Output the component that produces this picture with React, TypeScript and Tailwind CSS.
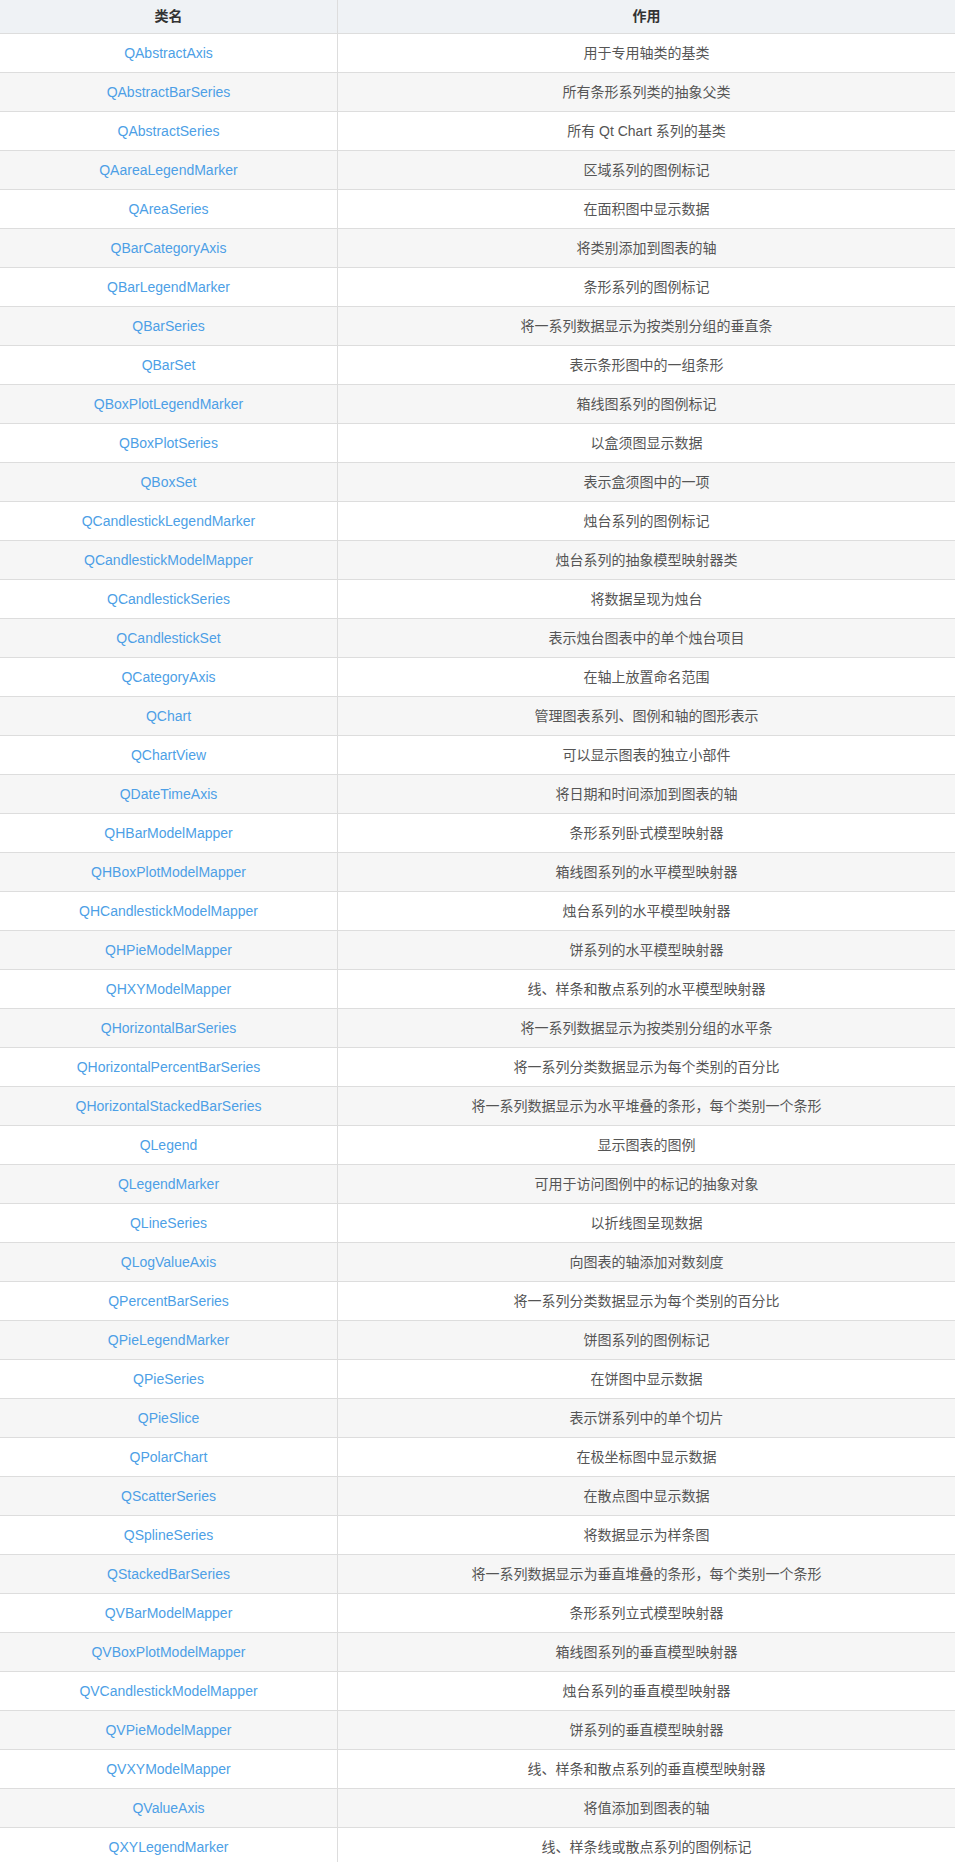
import React from 'react';

type Row = [string, string];

const rows: Row[] = [
    ['QAbstractAxis', '用于专用轴类的基类'],
    ['QAbstractBarSeries', '所有条形系列类的抽象父类'],
    ['QAbstractSeries', '所有 Qt Chart 系列的基类'],
    ['QAareaLegendMarker', '区域系列的图例标记'],
    ['QAreaSeries', '在面积图中显示数据'],
    ['QBarCategoryAxis', '将类别添加到图表的轴'],
    ['QBarLegendMarker', '条形系列的图例标记'],
    ['QBarSeries', '将一系列数据显示为按类别分组的垂直条'],
    ['QBarSet', '表示条形图中的一组条形'],
    ['QBoxPlotLegendMarker', '箱线图系列的图例标记'],
    ['QBoxPlotSeries', '以盒须图显示数据'],
    ['QBoxSet', '表示盒须图中的一项'],
    ['QCandlestickLegendMarker', '烛台系列的图例标记'],
    ['QCandlestickModelMapper', '烛台系列的抽象模型映射器类'],
    ['QCandlestickSeries', '将数据呈现为烛台'],
    ['QCandlestickSet', '表示烛台图表中的单个烛台项目'],
    ['QCategoryAxis', '在轴上放置命名范围'],
    ['QChart', '管理图表系列、图例和轴的图形表示'],
    ['QChartView', '可以显示图表的独立小部件'],
    ['QDateTimeAxis', '将日期和时间添加到图表的轴'],
    ['QHBarModelMapper', '条形系列卧式模型映射器'],
    ['QHBoxPlotModelMapper', '箱线图系列的水平模型映射器'],
    ['QHCandlestickModelMapper', '烛台系列的水平模型映射器'],
    ['QHPieModelMapper', '饼系列的水平模型映射器'],
    ['QHXYModelMapper', '线、样条和散点系列的水平模型映射器'],
    ['QHorizontalBarSeries', '将一系列数据显示为按类别分组的水平条'],
    ['QHorizontalPercentBarSeries', '将一系列分类数据显示为每个类别的百分比'],
    ['QHorizontalStackedBarSeries', '将一系列数据显示为水平堆叠的条形，每个类别一个条形'],
    ['QLegend', '显示图表的图例'],
    ['QLegendMarker', '可用于访问图例中的标记的抽象对象'],
    ['QLineSeries', '以折线图呈现数据'],
    ['QLogValueAxis', '向图表的轴添加对数刻度'],
    ['QPercentBarSeries', '将一系列分类数据显示为每个类别的百分比'],
    ['QPieLegendMarker', '饼图系列的图例标记'],
    ['QPieSeries', '在饼图中显示数据'],
    ['QPieSlice', '表示饼系列中的单个切片'],
    ['QPolarChart', '在极坐标图中显示数据'],
    ['QScatterSeries', '在散点图中显示数据'],
    ['QSplineSeries', '将数据显示为样条图'],
    ['QStackedBarSeries', '将一系列数据显示为垂直堆叠的条形，每个类别一个条形'],
    ['QVBarModelMapper', '条形系列立式模型映射器'],
    ['QVBoxPlotModelMapper', '箱线图系列的垂直模型映射器'],
    ['QVCandlestickModelMapper', '烛台系列的垂直模型映射器'],
    ['QVPieModelMapper', '饼系列的垂直模型映射器'],
    ['QVXYModelMapper', '线、样条和散点系列的垂直模型映射器'],
    ['QValueAxis', '将值添加到图表的轴'],
    ['QXYLegendMarker', '线、样条线或散点系列的图例标记'],
];

export default function App() {
    return (
        <div className="w-[955px] bg-white font-['Liberation_Sans','Noto_Sans_CJK_SC',sans-serif] text-[14px]">
            {/* header */}
            <div className="flex h-[34px] bg-[#eff2f5] border-b border-[#dddddd] font-bold text-[#333333]">
                <div className="w-[338px] border-r border-[#dddddd] flex items-center justify-center">类名</div>
                <div className="flex-1 flex items-center justify-center">作用</div>
            </div>
            {rows.map(([name, desc], i) => (
                <div
                    key={name}
                    className={`flex h-[39px] border-b border-[#dddddd] ${i % 2 === 1 ? 'bg-[#f6f6f6]' : 'bg-white'}`}
                >
                    <div className="w-[338px] border-r border-[#dddddd] flex items-center justify-center text-[#4d9fe6]">
                        {name}
                    </div>
                    <div className="flex-1 flex items-center justify-center text-[#555555]">{desc}</div>
                </div>
            ))}
        </div>
    );
}
